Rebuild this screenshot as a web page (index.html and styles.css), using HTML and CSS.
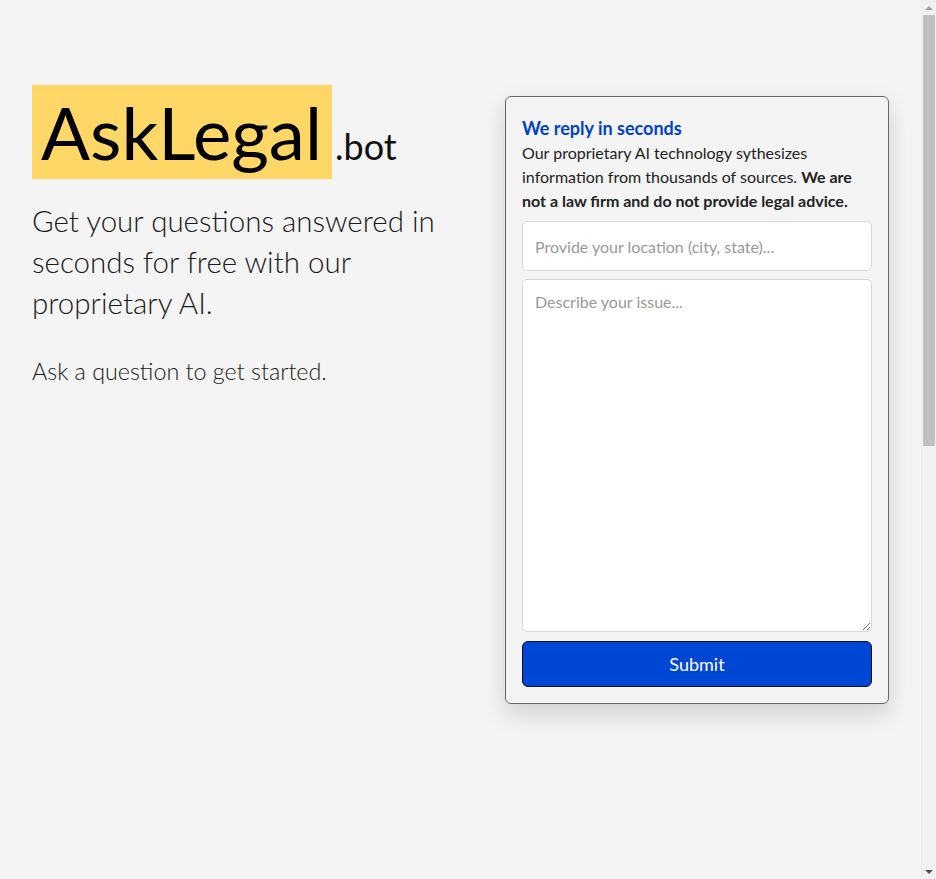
FILE: index.html
```html
<!DOCTYPE html>
<html lang="en">
<head>
<meta charset="utf-8">
<title>AskLegal.bot</title>
<link rel="stylesheet" href="styles.css">
</head>
<body>
<main class="page">
  <section class="intro">
    <h1 class="logo"><span class="logo-main">AskLegal</span><span class="logo-tld">.bot</span></h1>
    <p class="lead">Get your questions answered in seconds for free with our proprietary AI.</p>
    <p class="sub">Ask a question to get started.</p>
  </section>
  <form class="card">
    <h2 class="card-title">We reply in seconds</h2>
    <p class="card-text">Our proprietary AI technology sythesizes information from thousands of sources. <strong>We are not a law firm and do not provide legal advice.</strong></p>
    <input class="field" type="text" placeholder="Provide your location (city, state)...">
    <textarea class="field area" placeholder="Describe your issue..."></textarea>
    <button class="submit" type="button">Submit</button>
  </form>
</main>
<div class="scrollbar" aria-hidden="true">
  <div class="sb-btn"><span class="sb-up"></span></div>
  <div class="sb-thumb"></div>
  <div class="sb-fill"></div>
  <div class="sb-btn"><span class="sb-down"></span></div>
</div>
</body>
</html>
```
FILE: styles.css
```css
* { box-sizing: border-box; }
html, body { margin: 0; padding: 0; }
body {
  background: #f4f4f4;
  font-family: Lato, "Open Sans", sans-serif;
  color: #111;
}
.page {
  min-height: 1735px;
  display: flex;
  justify-content: space-between;
  align-items: flex-start;
  padding: 85px 47px 32px 32px;
}
.intro { flex: 1; max-width: 420px; }
.logo {
  margin: 0;
  font-weight: 400;
  display: flex;
  align-items: baseline;
}
.logo-main {
  background: #fed766;
  color: #000;
  font-size: 72.5px;
  line-height: 94px;
  padding: 0 10px 0 9px;
}
.logo-tld {
  font-size: 36px;
  color: #111;
  margin-left: 3px;
}
.lead {
  margin: 21px 0 0 0;
  font-size: 29.5px;
  line-height: 41px;
  font-weight: 300;
  color: #1a1a1a;
}
.sub {
  margin: 32px 0 0 0;
  font-size: 23.3px;
  line-height: 32px;
  font-weight: 300;
  color: #1a1a1a;
}
.card {
  width: 384px;
  margin-top: 11px;
  background: #f4f4f4;
  border: 1px solid #666;
  border-radius: 6px;
  box-shadow: 0 10px 25px rgba(0,0,0,0.15);
  padding: 16px;
  display: flex;
  flex-direction: column;
}
.card-title {
  margin: 4px 0 0 0;
  font-size: 18px;
  line-height: 22px;
  font-weight: 700;
  color: #0042c6;
}
.card-text {
  margin: 2px 0 0 0;
  font-size: 16px;
  line-height: 24px;
  color: #222;
}
.card-text strong { font-weight: 700; }
.field {
  display: block;
  width: 100%;
  margin-top: 8px;
  height: 50px;
  border: 1px solid #d8d8d8;
  border-radius: 5px;
  background: #fff;
  font-family: Lato, sans-serif;
  font-size: 16px;
  color: #222;
  padding: 12px;
}
.field::placeholder { color: #999; }
.area {
  margin-top: 8px;
  height: 353px;
  resize: vertical;
}
.submit {
  margin-top: 9px;
  height: 46px;
  width: 100%;
  background: #0046d5;
  color: #fff;
  border: 1px solid #111;
  border-radius: 6px;
  font-family: Lato, sans-serif;
  font-size: 18px;
}

/* simulated classic browser scrollbar */
.scrollbar {
  position: fixed;
  top: 0;
  right: 0;
  width: 15px;
  height: 100vh;
  background: #f1f1f1;
  border-left: 1px solid #ececec;
  display: flex;
  flex-direction: column;
}
.sb-btn {
  height: 15px;
  flex: none;
  display: flex;
  align-items: center;
  justify-content: center;
}
.sb-up {
  width: 0;
  height: 0;
  border-left: 4px solid transparent;
  border-right: 4px solid transparent;
  border-bottom: 4px solid #a3a3a3;
}
.sb-down {
  width: 0;
  height: 0;
  border-left: 4px solid transparent;
  border-right: 4px solid transparent;
  border-top: 4px solid #505050;
}
.sb-thumb {
  flex: none;
  height: 431px;
  margin: 0 1px 0 1px;
  background: #c1c1c1;
}
.sb-fill { flex: 1; }
```
